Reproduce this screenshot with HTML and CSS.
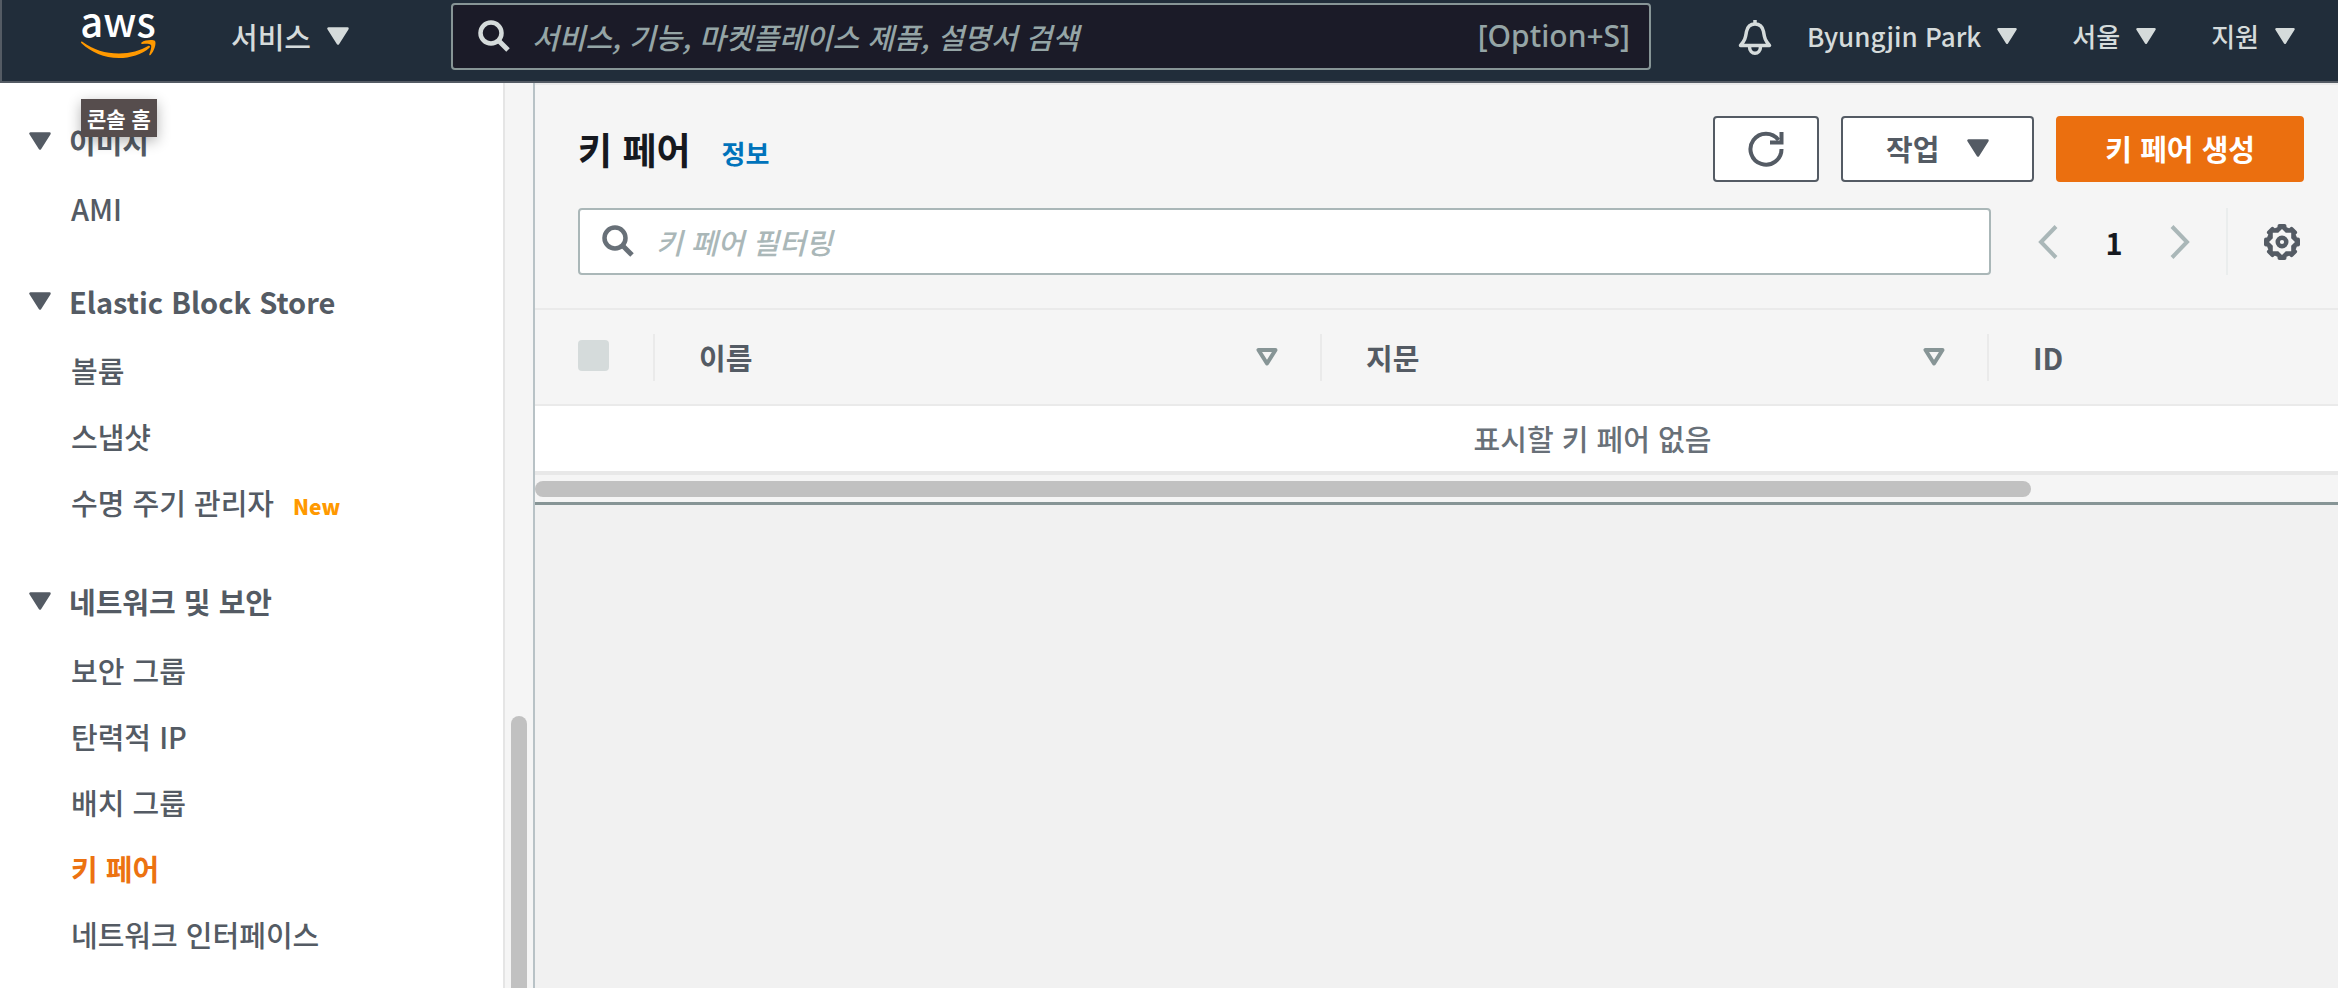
FILE: index.html
```html
<!DOCTYPE html>
<html lang="ko">
<head>
<meta charset="utf-8">
<meta name="viewport" content="width=device-width, initial-scale=1">
<title>키 페어</title>
<link rel="stylesheet" href="styles.css">
</head>
<body>
<svg class="sprite" aria-hidden="true">
  <symbol id="caret" viewBox="0 0 22 18"><path d="M1.500 1.500h19L11 16.500z" fill="currentColor" stroke="currentColor" stroke-width="2.500" stroke-linejoin="round"/></symbol>
  <symbol id="caret-outline" viewBox="0 0 22 18"><path d="M2.500 2h17L11 15.500z" fill="none" stroke="currentColor" stroke-width="4" stroke-linejoin="round"/></symbol>
  <symbol id="magnifier" viewBox="0 0 32 32"><circle cx="13" cy="13" r="10.500" fill="none" stroke="currentColor" stroke-width="4.500"/><path d="M20 20l10 10" fill="none" stroke="currentColor" stroke-width="5"/></symbol>
</svg>

<header class="topbar">
  <a class="logo" href="#" aria-label="AWS 콘솔 홈">
    <svg class="logo-art" viewBox="0 0 76 50" aria-hidden="true">
      <text class="logo-text" x="37" y="28" text-anchor="middle">aws</text>
      <path d="M1 32.500C13 41 24 44.500 38 44.500C49 44.500 60 41.500 67 37C68.500 36 69.800 37.500 68.500 38.700C61 45.500 49 49 38 49C23 49 10 43 .5 34.200C-.4 33.300 0 32 1 32.500z" fill="#ff9900"/>
      <path d="M60.500 33.500C64 30.800 72.500 30.500 74 32C75.500 34 73.500 42 69.500 46C68.500 46.700 68 46 68.400 45C69.500 42 70.800 37.500 70 36C69 34.500 64.500 34.500 61.500 35C60.200 35.200 59.700 34.200 60.500 33.500z" fill="#ff9900"/>
    </svg>
    <span class="tooltip" role="tooltip">콘솔 홈</span>
  </a>
  <button class="menu menu-services" type="button">서비스 <svg class="caret"><use href="#caret"/></svg></button>
  <label class="global-search">
    <svg class="search-icon" aria-label="검색"><use href="#magnifier"/></svg>
    <input type="search" placeholder="서비스, 기능, 마켓플레이스 제품, 설명서 검색" aria-label="서비스 검색">
    <span class="shortcut">[Option+S]</span>
  </label>
  <nav class="account">
    <button class="bell" type="button" aria-label="알림">
      <svg viewBox="0 0 36 36"><path d="M18 1v5M3.500 26.500C8.500 21 8.500 18 9.500 12.500C10.500 7.500 14 5 18 5s7.500 2.500 8.500 7.500C27.500 18 27.500 21 32.500 26.500z" fill="none" stroke="currentColor" stroke-width="3.500" stroke-linejoin="round"/><path d="M12.500 27.500c0 9 11 9 11 0" fill="none" stroke="currentColor" stroke-width="3.500"/></svg>
    </button>
    <button class="menu menu-small" type="button">Byungjin Park <svg class="caret"><use href="#caret"/></svg></button>
    <button class="menu menu-small" type="button">서울 <svg class="caret"><use href="#caret"/></svg></button>
    <button class="menu menu-small" type="button">지원 <svg class="caret"><use href="#caret"/></svg></button>
  </nav>
</header>

<div class="workspace">
  <aside class="sidebar">
    <nav class="side-nav">
      <section class="group">
        <h2><svg class="caret"><use href="#caret"/></svg>이미지</h2>
        <ul class="compact"><li><a href="#">AMI</a></li></ul>
      </section>
      <section class="group">
        <h2><svg class="caret"><use href="#caret"/></svg>Elastic Block Store</h2>
        <ul>
          <li><a href="#">볼륨</a></li>
          <li><a href="#">스냅샷</a></li>
          <li><a href="#">수명 주기 관리자</a><span class="badge-new">New</span></li>
        </ul>
      </section>
      <section class="group">
        <h2><svg class="caret"><use href="#caret"/></svg>네트워크 및 보안</h2>
        <ul>
          <li><a href="#">보안 그룹</a></li>
          <li><a href="#">탄력적 IP</a></li>
          <li><a href="#">배치 그룹</a></li>
          <li><a class="current" href="#" aria-current="page">키 페어</a></li>
          <li><a href="#">네트워크 인터페이스</a></li>
        </ul>
      </section>
    </nav>
    <div class="track-y"><div class="thumb-y"></div></div>
  </aside>

  <main class="content">
    <section class="panel">
      <div class="panel-head">
        <h1>키 페어</h1>
        <a class="info" href="#">정보</a>
        <div class="actions">
          <button class="btn btn-icon" type="button" aria-label="새로 고침">
            <svg viewBox="0 0 36 36"><path d="M33.500 18A15.500 15.500 0 1 1 30.500 9" fill="none" stroke="currentColor" stroke-width="4"/><path d="M33.500 1v10.500H22" fill="none" stroke="currentColor" stroke-width="4"/></svg>
          </button>
          <button class="btn btn-menu" type="button">작업 <svg class="caret"><use href="#caret"/></svg></button>
          <button class="btn btn-primary" type="button">키 페어 생성</button>
        </div>
      </div>
      <div class="filter-row">
        <label class="filter">
          <svg class="search-icon"><use href="#magnifier"/></svg>
          <input type="search" placeholder="키 페어 필터링" aria-label="키 페어 필터링">
        </label>
        <div class="pager">
          <button type="button" aria-label="이전 페이지"><svg viewBox="0 0 20 34"><path d="M18 1.500L3 17l15 15.500" fill="none" stroke="currentColor" stroke-width="4"/></svg></button>
          <span class="page">1</span>
          <button type="button" aria-label="다음 페이지"><svg viewBox="0 0 20 34"><path d="M2 1.500L17 17L2 32.500" fill="none" stroke="currentColor" stroke-width="4"/></svg></button>
        </div>
        <button class="settings" type="button" aria-label="기본 설정">
          <svg viewBox="-18 -18 36 36">
            <g fill="currentColor">
              <circle r="15.500"/>
              <rect x="-4.500" y="-18" width="9" height="36" rx="2"/>
              <rect x="-4.500" y="-18" width="9" height="36" rx="2" transform="rotate(45)"/>
              <rect x="-4.500" y="-18" width="9" height="36" rx="2" transform="rotate(90)"/>
              <rect x="-4.500" y="-18" width="9" height="36" rx="2" transform="rotate(135)"/>
            </g>
            <path class="gear-hole" d="M0-13L3.800-9.200L9.200-9.200L9.200-3.800L13 0L9.200 3.800L9.200 9.200L3.800 9.200L0 13L-3.800 9.200L-9.200 9.200L-9.200 3.800L-13 0L-9.200-3.800L-9.200-9.200L-3.800-9.200z"/>
            <circle r="4.300" fill="none" stroke="currentColor" stroke-width="4.400"/>
          </svg>
        </button>
      </div>
      <div class="table-wrap">
        <table>
          <colgroup><col class="col-check"><col class="col-data"><col class="col-data"><col></colgroup>
          <thead>
            <tr>
              <th><input type="checkbox" disabled aria-label="모두 선택"></th>
              <th><div class="th">이름 <svg class="caret sort"><use href="#caret-outline"/></svg></div></th>
              <th><div class="th">지문 <svg class="caret sort"><use href="#caret-outline"/></svg></div></th>
              <th><div class="th">ID</div></th>
            </tr>
          </thead>
          <tbody><tr><td colspan="4">표시할 키 페어 없음</td></tr></tbody>
        </table>
      </div>
      <div class="track-x"><div class="thumb-x"></div></div>
    </section>
  </main>
</div>
</body>
</html>
```
FILE: styles.css
```css
* { box-sizing: border-box; }

body {
  margin: 0;
  height: 100vh;
  display: flex;
  flex-direction: column;
  overflow: hidden;
  background: #f1f1f1;
  color: #545b64;
  font: 500 29px/40px "Noto Sans CJK KR", "Noto Sans", sans-serif;
}

button, input {
  font: inherit;
  color: inherit;
  margin: 0;
  padding: 0;
  border: 0;
  background: none;
}

a { color: inherit; text-decoration: none; }
h1, h2, ul { margin: 0; padding: 0; }
ul { list-style: none; }
svg { display: block; flex: none; }
.sprite { position: absolute; width: 0; height: 0; }
.caret { width: 22px; height: 18px; }

/* Top bar */
.topbar {
  flex: none;
  display: flex;
  align-items: flex-start;
  height: 83px;
  padding: 3px 43px 0 79px;
  border-left: 2px solid #545b64;
  border-bottom: 2px solid #545b64;
  background: #212d3a;
  color: #d5dbdb;
}

.logo { position: relative; width: 76px; padding-top: 6px; }
.logo-art { width: 76px; height: 50px; overflow: visible; }
.logo-text { font: 500 40px "Noto Sans CJK KR", sans-serif; fill: #fff; }

.tooltip {
  position: absolute;
  top: 96px;
  left: 0;
  z-index: 2;
  padding: 0 6px;
  background: #564d4d;
  color: #fff;
  font-size: 21px;
  font-weight: 700;
  line-height: 38px;
  white-space: nowrap;
  box-shadow: 0 4px 14px rgba(0, 0, 0, .3);
}

.menu { display: flex; align-items: center; gap: 16px; height: 67px; padding-bottom: 2px; white-space: nowrap; }
.menu-services { margin: 0 102px 0 74px; }

.global-search {
  flex: 1;
  display: flex;
  align-items: center;
  height: 67px;
  padding: 0 19px 2px 25px;
  border: 2px solid #879596;
  border-radius: 4px;
  background: #1b1b28;
}

.search-icon { width: 32px; height: 32px; }
.global-search input, .filter input { flex: 1; min-width: 0; margin-left: 22px; outline: 0; }
.global-search input::placeholder { color: #95a5a6; opacity: 1; font-style: italic; }
.shortcut { color: #95a5a6; font-family: "Noto Sans", sans-serif; font-size: 30px; }

.account { display: flex; margin-left: 86px; align-items: center; height: 67px; }
.bell { margin-right: 34px; }
.bell svg { width: 36px; height: 36px; }
.menu-small { font-size: 26px; }
.menu-small + .menu-small { margin-left: 55px; }
.menu-small .caret { width: 20px; }

/* Sidebar */
.workspace { flex: 1; display: flex; min-height: 0; }
.sidebar { flex: none; display: flex; width: 535px; background: #fff; overflow: hidden; }
.side-nav { flex: 1; padding: 35px 0 0 29px; }
.group { margin-bottom: 39px; }
.group h2 { display: flex; align-items: center; gap: 18px; height: 46px; font-size: 29px; font-weight: 700; }
.group ul { padding: 13px 0 0 42px; }
.group li { display: flex; align-items: baseline; line-height: 66px; }
.group .compact li { line-height: 62px; }
.current { color: #ec7211; font-weight: 700; }
.badge-new { margin-left: 19px; color: #ff9900; font-size: 21px; font-weight: 900; }

.track-y {
  width: 32px;
  padding: 633px 6px 0;
  border-left: 2px solid #e5e5e5;
  border-right: 2px solid #b8c2c6;
  background: #f5f5f5;
}
.thumb-y { height: 400px; border-radius: 8px; background: #c1c1c1; }

/* Key pair panel */
.content { flex: 1; min-width: 0; }
.panel { border-top: 2px solid #eaeaea; border-bottom: 3px solid #879596; background: #f5f5f5; }
.panel-head { display: flex; align-items: center; padding: 31px 34px 0 43px; }
h1 { color: #16191f; font-size: 37px; line-height: 66px; }
.info { margin: 8px 0 0 31px; color: #0073bb; font-size: 26px; font-weight: 700; }
.actions { display: flex; gap: 22px; margin-left: auto; }

.btn {
  display: flex;
  align-items: center;
  justify-content: center;
  gap: 28px;
  height: 66px;
  padding: 0 43px 2px;
  border: 2px solid #545b64;
  border-radius: 4px;
  background: #fff;
  font-weight: 700;
}
.btn-icon { padding: 0 33px; }
.btn-icon svg { width: 36px; height: 36px; }
.btn-primary { padding: 0 47px 2px; border-color: #eb6f0f; background: #eb6f0f; color: #fff; }

.filter-row { display: flex; align-items: center; padding: 26px 38px 33px 43px; }
.filter {
  flex: 1;
  display: flex;
  align-items: center;
  height: 67px;
  padding: 0 22px 2px;
  border: 2px solid #aab7b8;
  border-radius: 4px;
  background: #fff;
  color: #687078;
}
.filter input::placeholder { color: #aab7b8; opacity: 1; font-style: italic; }

.pager { display: flex; align-items: center; margin-left: 47px; color: #aab7b8; }
.pager svg { width: 20px; height: 34px; }
.page { width: 112px; color: #16191f; font-weight: 700; text-align: center; }
.settings { display: flex; align-items: center; height: 67px; margin-left: 36px; padding-left: 36px; border-left: 2px solid #eaeded; }
.settings svg { width: 36px; height: 36px; }
.gear-hole { fill: #f5f5f5; }

/* Table */
.table-wrap { overflow: hidden; border-top: 2px solid #eaeaea; }
table { width: 100%; min-width: 2115px; table-layout: fixed; border-collapse: collapse; }
.col-check { width: 118px; }
.col-data { width: 667px; }
th { height: 95px; padding: 0; border-bottom: 2px solid #eaeaea; text-align: left; }
.th { display: flex; align-items: center; justify-content: space-between; height: 47px; padding: 0 42px 0 44px; border-left: 2px solid #eaeaea; }
.sort { color: #879596; }
td { height: 68px; padding: 0 0 2px; border-bottom: 4px solid #e8e8e8; background: #fff; color: #687078; text-align: center; }
input[type="checkbox"] {
  display: block;
  appearance: none;
  width: 31px;
  height: 31px;
  margin: 0 0 4px 43px;
  border-radius: 4px;
  background: #d5dbdb;
}
.track-x { padding: 6px 0 5px; }
.thumb-x { width: 83%; height: 16px; border-radius: 8px; background: #c1c1c1; }
```
